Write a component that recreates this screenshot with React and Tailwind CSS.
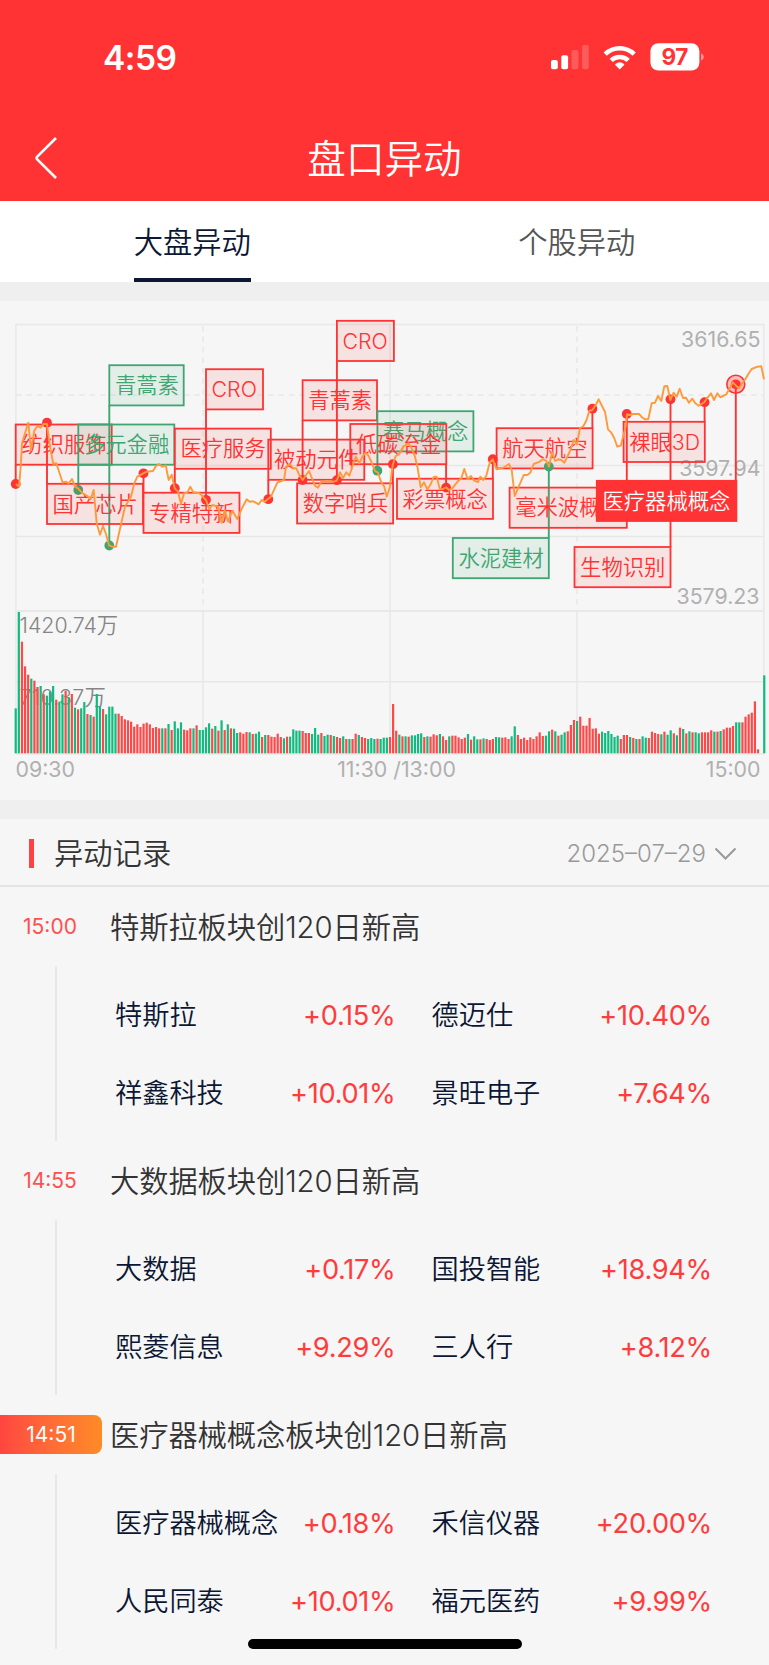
const RED = "#ff3333";
const GREEN = "#3fa672";

// tags pinned on the index curve: box + the point they hang from
const TAGS = [
  { text: "纺织服饰", x: 15.7, y: 424.5, w: 96, px: 15.7, py: 484 },
  { text: "多元金融", x: 78.3, y: 424.5, w: 96, px: 78.3, py: 490, green: true },
  { text: "青蒿素", x: 109.3, y: 365.2, w: 74.4, px: 109.3, py: 545.5, green: true },
  { text: "国产芯片", x: 47, y: 483.8, w: 96, px: 47, py: 422.7 },
  { text: "专精特新", x: 143.5, y: 492.7, w: 96, px: 143.5, py: 473.3 },
  { text: "医疗服务", x: 174.8, y: 428.6, w: 96, px: 174.8, py: 488.2 },
  { text: "CRO", x: 206, y: 369.2, w: 57, px: 206, py: 499.8 },
  { text: "被动元件", x: 268.3, y: 439.6, w: 96, px: 268.3, py: 499.2 },
  { text: "青蒿素", x: 302.6, y: 380.2, w: 74.4, px: 302.6, py: 480 },
  { text: "CRO", x: 336.9, y: 320.8, w: 57, px: 336.9, py: 480.2 },
  { text: "赛马概念", x: 377.4, y: 411.2, w: 96, px: 377.4, py: 470.7, green: true },
  { text: "数字哨兵", x: 297.1, y: 483.3, w: 96, px: 392.9, py: 464.2 },
  { text: "低碳冶金", x: 350.3, y: 424, w: 96, px: 446.1, py: 487.6 },
  { text: "彩票概念", x: 397, y: 478.7, w: 96, px: 492.8, py: 459.2 },
  { text: "航天航空", x: 496.6, y: 428.2, w: 96, px: 592.4, py: 408.7 },
  { text: "水泥建材", x: 452.8, y: 538, w: 96, px: 548.8, py: 466.6, green: true },
  { text: "毫米波概念", x: 509.6, y: 487.6, w: 117.2, px: 626.8, py: 414 },
  { text: "裸眼3D", x: 623.6, y: 421.8, w: 81.2, px: 704.6, py: 402.2 },
  { text: "生物识别", x: 574.5, y: 547, w: 96, px: 670.5, py: 399.3 },
  { text: "医疗器械概念", x: 596.8, y: 480.8, w: 139.6, px: 735.8, py: 384.3, active: true },
];

// index curve, x/y at 3x, one chunk per third of the day
const CURVE = [
  {
    x0: 0,
    pts: "47,552 57,560 62,500 66,430 75,400 85,368 93,450 103,392 112,378 122,383 131,372 141,372 150,440 160,492 169,490 188,548 197,545 206,550 216,537 225,560 234,565 248,580 262,588 272,598 281,570 290,670 300,704 309,678 318,702 327,736 337,740 348,740 357,700 375,620 393,590 403,550 412,530 430,520 440,515 459,513 468,498 477,492 487,500 497,496 506,540 515,524 524,565 534,575 543,612 552,580 562,578 571,560 580,577 599,580 618,600 628,628 637,615 655,620 665,668 674,630 684,665 697,632 712,657 721,636 730,617 740,598 749,605 758,604",
  },
  {
    x0: 750,
    pts: "12,605 26,613 35,600 44,605 54,597 63,590 82,548 102,540 108,500 120,492 130,505 139,505 148,525 158,540 168,525 177,513 195,557 204,563 214,545 232,543 251,545 260,542 270,517 279,534 289,517 298,527 307,500 317,470 328,490 337,470 347,458 356,468 366,490 375,513 384,518 393,545 403,560 410,590 420,560 428,495 437,468 447,463 460,440 475,430 485,445 495,470 503,505 512,562 522,547 532,568 541,555 551,531 560,530 569,566 578,568 588,562 597,570 607,565 625,542 634,535 643,507 653,538 663,528 672,542 684,546 691,530 700,540 709,527 719,488 728,478 740,508 760,503",
  },
  {
    x0: 1527,
    pts: "0,492 8,510 17,588 27,565 44,525 55,525 64,518 74,492 92,485 102,477 111,482 120,500 129,457 138,483 148,478 157,480 166,488 176,468 185,448 194,420 204,433 213,384 222,380 232,362 241,333 250,330 260,315 269,298 279,318 288,335 297,388 307,398 316,415 325,440 335,437 345,400 350,380 354,343 363,345 372,342 390,342 400,353 409,358 418,357 428,310 438,308 447,288 457,303 466,259 475,258 484,300 494,278 503,290 512,266 522,294 531,293 540,308 550,296 559,310 569,317 586,307 596,292 606,280 615,300 625,280 634,292 652,283 662,265 671,247 681,257 690,265 700,250 709,238 718,222 728,207 745,200 757,199 765,238",
  },
];

const curvePoints = CURVE.flatMap(({ x0, pts }) =>
  pts
    .split(" ")
    .map((p) => p.split(",").map(Number))
    .map(([x, y]) => `${((x + x0) / 3).toFixed(1)},${(y / 3 + 300).toFixed(1)}`)
).join(" ");

// bar tops (3x) with direction, one per minute
const VOLUME =
  "505G 216G 305R 379R 404R 416G 422R 441R 438G 463R 467G 455G 438G 479R 485G 463G 452R 472G 462R 503G 508R 505G 486G 522R 525G 530R 462G 500G 507R 523G 500G 500G 521G 521R 528R 538R 541R 545R 560R 553R 561R 551R 548R 553R 564R 561R 565R 565G 565R 552G 570R 544G 565G 547G 569R 571R 565R 565G 556R 570G 570G 562G 550G 566R 558G 572R 541G 570R 553G 565R 566G 579G 577R 581R 576R 577G 582R 581G 575G " +
  "591R 585G 585R 590R 591R 581R 591R 595G 590R 590G 568G 572G 572G 573R 579R 579R 582G 564G 584G 579R 588G 584G 585R 588G 591R 594R 589G 597R 597G 597R 581R 585G 591R 594R 597G 594G 597G 596R 597G 593G 593G 591R 492R 572R 584G 589R 589G 590R 586G 586G 582G 580G 591R 589G 590R 583R 586R 582G 589R 600R 589G 587R 587R 592R 597R 593R 582G 599R 589G 598G 598R 595G 597R 600R 597R 591G 592G 593R 592R 597R " +
  "589G 559G 585R 597R 593R 600R 592R 597R 589R 577R 588R 587G 574G 569R 574G 587R 584G 577G 574R 555R 540R 543G 530R 557R 557R 534R 566R 565R 581R 575G 579G 573G 582G 591G 587G 597R 585R 585R 591G 594R 597G 597R 589G 593G 594R 575R 579R 582R 583G 575R 584G 571G 580R 586G 563R 567G 580R 574G 577R 577G 580G 577R 577R 577R 571R 575G 575R 573G 568R 563R 563R 558R 547G 547G 547R 530R 523R 518R 484R 628R 640R 406G";

const volumeBars = VOLUME.split(" ");

const RECORDS = [
  {
    time: "15:00",
    title: "特斯拉板块创120日新高",
    stocks: [
      ["特斯拉", "+0.15%"],
      ["德迈仕", "+10.40%"],
      ["祥鑫科技", "+10.01%"],
      ["景旺电子", "+7.64%"],
    ],
  },
  {
    time: "14:55",
    title: "大数据板块创120日新高",
    stocks: [
      ["大数据", "+0.17%"],
      ["国投智能", "+18.94%"],
      ["熙菱信息", "+9.29%"],
      ["三人行", "+8.12%"],
    ],
  },
  {
    time: "14:51",
    title: "医疗器械概念板块创120日新高",
    active: true,
    stocks: [
      ["医疗器械概念", "+0.18%"],
      ["禾信仪器", "+20.00%"],
      ["人民同泰", "+10.01%"],
      ["福元医药", "+9.99%"],
    ],
  },
];

const StatusBar = () => (
  <div className="flex h-[114px] items-center justify-between pl-[103px] pr-[65px] text-white">
    <span className="pt-[3px] text-[33.5px] font-semibold leading-none tracking-[-0.5px]">4:59</span>
    <svg width="154" height="28" viewBox="550 43 154 28" fill="currentColor">
      <rect x="551" y="60" width="6.8" height="9.2" rx="2" />
      <rect x="561.3" y="55.3" width="6.8" height="13.9" rx="2" />
      <rect x="571.6" y="50" width="6.8" height="19.2" rx="2" opacity="0.2" />
      <rect x="582" y="45" width="6.8" height="24.2" rx="2" opacity="0.2" />
      <path d="M619.7 69.4 L615.3 65 Q614.8 64.4 615.4 63.9 Q619.7 60.8 624 63.9 Q624.6 64.4 624.1 65 Z" />
      <path d="M611.2 60.3 A12.4 12.4 0 0 1 628.2 60.3" fill="none" stroke="currentColor" strokeWidth="4.6" />
      <path d="M605.2 54.2 A20.8 20.8 0 0 1 634.2 54.2" fill="none" stroke="currentColor" strokeWidth="4.6" />
      <rect x="650.4" y="43.2" width="49" height="27.4" rx="8" />
      <path d="M701 53.3 Q703.8 54.3 703.8 57 Q703.8 59.7 701 60.7 Z" opacity="0.5" />
      <text
        x="674.8"
        y="64.9"
        textAnchor="middle"
        fontSize="22.5"
        fontWeight="700"
        fill={RED}
        letterSpacing="-0.3"
      >
        97
      </text>
    </svg>
  </div>
);

const Chart = () => (
  <svg
    className="block h-[499px] w-full"
    viewBox="0 301 769 499"
    fontFamily='Inter, "Noto Sans CJK SC", sans-serif'
    fontWeight="350"
    fontSize="21.33"
  >
    <g stroke="#e8e8e8" strokeWidth="1.5" fill="none">
      <path d="M16 324.4H763.8M16 465.5H763.8M16 536.4H763.8M16 681.8H763.8M16 753.9H763.8" />
      <path d="M16 611H763.8" strokeWidth="2" />
      <path d="M15.9 324V754M763.8 324V754M390 324V754M203 611V754M577 611V754" />
      <path d="M16 395H763.8M203 326V611M577 326V611" strokeDasharray="5.5 5" />
    </g>

    <g fill="#b0b0b0" fontWeight="400">
      <text x="760.5" y="347.4" textAnchor="end">3616.65</text>
      <text x="760.5" y="475.8" textAnchor="end">3597.94</text>
      <text x="759.5" y="604" textAnchor="end">3579.23</text>
      <text x="15.5" y="777.4">09:30</text>
      <text x="396.5" y="777.4" textAnchor="middle">11:30 /13:00</text>
      <text x="760.5" y="777.4" textAnchor="end">15:00</text>
    </g>

    <g fill="#858585">
      <text x="19.5" y="632.8">1420.74万</text>
      <text x="19.5" y="705.4" letterSpacing="0.3">710.37万</text>
    </g>

    {volumeBars.map((bar, i) => {
      const top = 540 + parseInt(bar, 10) / 3;
      return (
        <rect
          key={i}
          x={14.6 + i * 3.119}
          y={top}
          width="2.2"
          height={Math.max(0, 753.3 - top)}
          fill={bar.endsWith("R") ? "#ff4848" : "#0fbb7f"}
        />
      );
    })}

    {TAGS.map((tag, i) => {
      const color = tag.green ? GREEN : RED;
      const h = 40.2;
      return (
        <g key={i}>
          <path
            d={`M${tag.px} ${tag.py}V${tag.py > tag.y ? tag.y + h : tag.y}`}
            stroke={color}
            strokeWidth="1.9"
          />
          {tag.active && (
            <circle cx={tag.px} cy={tag.py} r="9" fill={color} fillOpacity="0.3" stroke={color} strokeWidth="1.6" />
          )}
          <circle cx={tag.px} cy={tag.py} r="4.9" fill={color} />
          <rect
            x={tag.x}
            y={tag.y}
            width={tag.w}
            height={h}
            fill={color}
            fillOpacity={tag.active ? 1 : 0.1}
            stroke={color}
            strokeWidth="1.8"
          />
          <text x={tag.x + 5.6} y={tag.y + 27.8} fill={tag.active ? "#fff" : color}>
            {tag.text}
          </text>
        </g>
      );
    })}

    <polyline
      points={curvePoints}
      fill="none"
      stroke="#ff9a3c"
      strokeWidth="1.9"
      strokeLinejoin="round"
    />
  </svg>
);

const Record = ({ record }) => (
  <div className="h-[254px]">
    <div className="flex h-[79px] items-center">
      {record.active ? (
        <span className="flex h-[39px] w-[102px] items-center justify-center rounded-r-lg bg-linear-to-r from-[#ff4540] to-[#ff8a26] text-[21px] font-normal text-white">
          {record.time}
        </span>
      ) : (
        <span className="flex w-[102px] justify-center pr-0.5 text-[21px] font-normal text-[#ff4f4f]">
          {record.time}
        </span>
      )}
      <h3 className="ml-2 pt-0.5 text-[29.3px] leading-none tracking-[-0.1px] text-[#333]">{record.title}</h3>
    </div>
    <div className="ml-[55px] h-[175px] border-l-2 border-[#e8e8e8] pl-[58px] pr-[57px] pt-[11px]">
      <div className="grid grid-cols-2 gap-x-[36px]">
        {record.stocks.map(([name, change]) => (
          <div
            key={name}
            className="flex h-[78px] items-center justify-between whitespace-nowrap text-[27.2px] leading-none"
          >
            <span className="text-[#0b1733]">{name}</span>
            <span className="font-normal tracking-[-0.3px] text-[#ff3c3c]">{change}</span>
          </div>
        ))}
      </div>
    </div>
  </div>
);

export default function App() {
  return (
    <div className='relative h-[1665px] w-[769px] overflow-hidden bg-[#f6f6f6] font-[Inter,"Noto_Sans_CJK_SC",sans-serif] [font-weight:350]'>
      <header className="h-[201px] bg-[#ff3333]">
        <StatusBar />
        <div className="grid h-[87px] grid-cols-[80px_1fr_80px] items-center text-white">
          <svg className="ml-[34px]" width="24" height="44" viewBox="0 0 24 44" fill="none">
            <path d="M22 2 L3 20.8 Q2 22 3 23.2 L22 42" stroke="currentColor" strokeWidth="2.6" />
          </svg>
          <h1 className="pt-1 text-center text-[38.6px] leading-none [font-weight:350]">盘口异动</h1>
        </div>
      </header>

      <nav className="grid h-[81px] grid-cols-2 justify-items-center bg-white text-[29.3px] leading-none">
        <div className="flex items-center border-b-4 border-[#0b1733] pt-1.5 text-[#0b1733]">大盘异动</div>
        <div className="flex items-center border-b-4 border-transparent pt-1.5 text-[#555]">个股异动</div>
      </nav>

      <section className="border-y-[19px] border-[#efefef]">
        <Chart />
      </section>

      <section>
        <div className="flex h-[68px] items-center justify-between border-b-2 border-[#e4e4e4] pl-[29px] pr-[32px] pt-1">
          <div className="flex items-center gap-[20px]">
            <span className="h-[29px] w-[5px] bg-[#ff4141]" />
            <h2 className="text-[29.3px] leading-none text-[#333]">异动记录</h2>
          </div>
          <div className="flex items-center gap-2 text-[#999]">
            <span className="text-[24px]">2025–07–29</span>
            <svg width="23" height="14" viewBox="0 0 23 14" fill="none">
              <path d="M1.5 1.5 L11.5 11.5 L21.5 1.5" stroke="currentColor" strokeWidth="2" />
            </svg>
          </div>
        </div>
        {RECORDS.map((record) => (
          <Record key={record.time} record={record} />
        ))}
      </section>

      {/* home indicator */}
      <div className="absolute bottom-4 left-[248px] h-[10px] w-[274px] rounded-full bg-black" />
    </div>
  );
}
